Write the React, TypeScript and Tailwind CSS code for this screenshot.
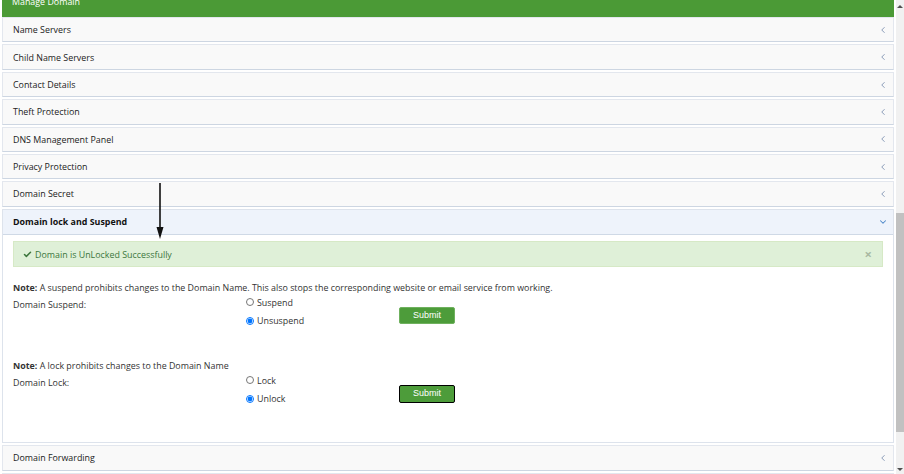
import { ChevronLeft, ChevronDown, Check } from 'lucide-react'

const rowsTop = [
    'Name Servers',
    'Child Name Servers',
    'Contact Details',
    'Theft Protection',
    'DNS Management Panel',
    'Privacy Protection',
    'Domain Secret',
]

function Row({ label }: { label: string }) {
    return (
        <div className="h-[23.4px] mb-[2px] flex items-center justify-between pl-[10px] pr-[5px] bg-[#f9f9f9] border-t border-x border-[#e3e7ee] border-b border-b-[#cdd6e2] box-content">
            <span className="text-[#222] text-[8.9px]">{label}</span>
            <ChevronLeft size={10} strokeWidth={2} className="text-[#7489ab]" />
        </div>
    )
}

function Radio({ label, checked }: { label: string; checked?: boolean }) {
    return (
        <label className="flex items-center gap-[3px] h-[18.5px] text-[#333] text-[8.9px]">
            <input type="radio" defaultChecked={checked} className="w-[8px] h-[8px] m-0" />
            {label}
        </label>
    )
}

function SubmitButton({ focused }: { focused?: boolean }) {
    return (
        <button
            className={`w-[56px] h-[17px] rounded-[2px] bg-[#4d9c3a] text-white text-[9px] ${focused ? 'h-[18px] border-[1.5px] border-black' : 'border border-[#6fb15e]'}`}
            style={{ fontFamily: '"Liberation Sans", Arial, sans-serif' }}
        >
            Submit
        </button>
    )
}

export default function App() {
    return (
        <div className="flex w-[904px] h-[474px] overflow-hidden bg-white relative" style={{ fontFamily: '"Open Sans", sans-serif' }}>
            <div className="w-[896px] pl-[2px] pr-[2px]">
                {/* Panel heading, scrolled out */}
                <div className="mt-[-9px] h-[25.6px] bg-[#4b9a36] text-white text-[8.9px] pl-[10px] pb-[5px] flex items-center mb-[0.5px]">
                    Manage Domain
                </div>

                {rowsTop.map((r) => (
                    <Row key={r} label={r} />
                ))}

                {/* Expanded section */}
                <div className="border border-[#dde3ec] mb-[2px]">
                    <div className="h-[25.4px] flex items-center justify-between pl-[10px] pr-[5px] bg-[#eef3fb] border-b border-[#cfd9e6]">
                        <span className="text-[#111] text-[8.9px] font-bold">Domain lock and Suspend</span>
                        <ChevronDown size={10} strokeWidth={2.5} className="text-[#4a86c8]" />
                    </div>
                    <div className="h-[207px] px-[10px] pt-[6px] text-[8.9px] text-[#333]">
                        <div className="h-[26px] bg-[#dff0d8] border border-[#d6e9c6] flex items-center justify-between pl-[9px] pr-[10px] text-[#3c763d]">
                            <span className="flex items-center gap-[3px]">
                                <Check size={9} strokeWidth={4} />
                                Domain is UnLocked Successfully
                            </span>
                            <span className="text-[#a9b9a3] text-[13px] font-bold leading-none">×</span>
                        </div>

                        <p className="mt-[14px] leading-[13px]">
                            <b className="font-bold">Note:</b> A suspend prohibits changes to the Domain Name. This also stops the corresponding website or email service from working.
                        </p>
                        <div className="flex mt-[2px]">
                            <div className="w-[233px] pt-[2px]">Domain Suspend:</div>
                            <div className="w-[153px] flex flex-col mt-[-3px]">
                                <Radio label="Suspend" />
                                <Radio label="Unsuspend" checked />
                            </div>
                            <div className="flex items-center pt-[5px]">
                                <SubmitButton />
                            </div>
                        </div>

                        <p className="mt-[29px] leading-[13px]">
                            <b className="font-bold">Note:</b> A lock prohibits changes to the Domain Name
                        </p>
                        <div className="flex mt-[2px]">
                            <div className="w-[233px] pt-[2px]">Domain Lock:</div>
                            <div className="w-[153px] flex flex-col mt-[-3px]">
                                <Radio label="Lock" />
                                <Radio label="Unlock" checked />
                            </div>
                            <div className="flex items-center pt-[5px]">
                                <SubmitButton focused />
                            </div>
                        </div>
                    </div>
                </div>

                <Row label="Domain Forwarding" />
                <Row label="Domain Transfer" />
            </div>

            {/* Scrollbar */}
            <div className="w-[8px] h-full bg-[#f1f1f1] flex flex-col items-center">
                <div className="h-[12px] flex items-center justify-center">
                    <div className="w-0 h-0 border-x-[3px] border-x-transparent border-b-[3px] border-b-[#505050]" />
                </div>
                <div className="h-[201px]" />
                <div className="w-[8px] h-[219px] bg-[#c1c1c1]" />
                <div className="flex-1" />
                <div className="h-[10px] flex items-center justify-center">
                    <div className="w-0 h-0 border-x-[3px] border-x-transparent border-t-[3px] border-t-[#505050]" />
                </div>
            </div>

            {/* Annotation arrow */}
            <svg className="absolute left-[155px] top-[182px]" width="10" height="58" viewBox="0 0 10 58">
                <line x1="5" y1="1" x2="5" y2="48" stroke="#111" strokeWidth="1.6" />
                <polygon points="1.5,45 8.5,45 5,57" fill="#111" />
            </svg>
        </div>
    )
}
